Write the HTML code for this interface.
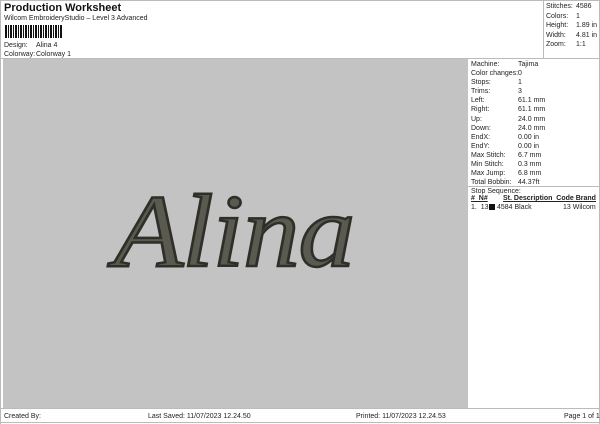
<!DOCTYPE html>
<html><head><meta charset="utf-8"><style>
*{margin:0;padding:0;box-sizing:border-box}
body{width:600px;height:424px;background:#fff;font-family:"Liberation Sans",sans-serif;font-size:7px;color:#222;position:relative;overflow:hidden}
.a{position:absolute;white-space:nowrap}
.ln{position:absolute;background:#bbb}
</style></head><body>
<div class="ln" style="left:0;top:0;width:600px;height:1px"></div>
<div class="ln" style="left:0;top:0;width:1px;height:424px"></div>
<div class="ln" style="left:599px;top:0;width:1px;height:424px"></div>
<div class="ln" style="left:543px;top:0;width:1px;height:58px"></div>
<div class="ln" style="left:0;top:58px;width:600px;height:1px"></div>
<div class="a" style="left:4px;top:2px;font-size:11px;font-weight:bold;color:#111">Production Worksheet</div>
<div class="a" style="left:4px;top:15px">Wilcom EmbroideryStudio – Level 3 Advanced</div>
<div class="a" style="left:5px;top:25px;width:57px;height:13px;background:repeating-linear-gradient(90deg,#111 0 2px,#fff 2px 3px,#111 3px 4px,#fff 4px 5px)"></div>
<div class="a" style="left:4px;top:42px">Design:</div><div class="a" style="left:36px;top:42px">Alina 4</div>
<div class="a" style="left:4px;top:51px">Colorway:</div><div class="a" style="left:36px;top:51px">Colorway 1</div>
<div class="a" style="left:546px;top:2px;line-height:9.5px">Stitches:<br>Colors:<br>Height:<br>Width:<br>Zoom:</div>
<div class="a" style="left:576px;top:2px;line-height:9.5px">4586<br>1<br>1.89 in<br>4.81 in<br>1:1</div>
<div class="a" style="left:3px;top:59px;width:465px;height:349px;background:#c3c3c3"></div>
<div class="a" style="left:114px;top:172px;font-family:'Liberation Serif',serif;font-style:italic;font-size:104px;color:#5a5a50;-webkit-text-stroke:2.5px #2f2f29;transform:scaleX(1.09);transform-origin:left top;letter-spacing:-1px">Alina</div>
<div class="a" style="left:471px;top:60px;line-height:9.1px">Machine:<br>Color changes:<br>Stops:<br>Trims:<br>Left:<br>Right:<br>Up:<br>Down:<br>EndX:<br>EndY:<br>Max Stitch:<br>Min Stitch:<br>Max Jump:<br>Total Bobbin:<br>Stop Sequence:</div>
<div class="a" style="left:518px;top:60px;line-height:9.1px">Tajima<br>0<br>1<br>3<br>61.1 mm<br>61.1 mm<br>24.0 mm<br>24.0 mm<br>0.00 in<br>0.00 in<br>6.7 mm<br>0.3 mm<br>6.8 mm<br>44.37ft</div>
<div class="ln" style="left:468px;top:186px;width:131px;height:1px"></div>
<div class="a" style="left:471px;top:195px;font-weight:bold;text-decoration:underline">#&nbsp;&nbsp;N#</div>
<div class="a" style="left:503px;top:195px;font-weight:bold;text-decoration:underline">St. Description&nbsp;&nbsp;Code Brand</div>
<div class="a" style="left:471px;top:204px">1.&nbsp;&nbsp;13</div>
<div class="a" style="left:489px;top:204px;width:6px;height:6px;background:#111"></div>
<div class="a" style="left:497px;top:204px">4584 Black</div>
<div class="a" style="left:563px;top:204px">13 Wilcom</div>
<div class="ln" style="left:0;top:408px;width:600px;height:1px"></div>
<div class="ln" style="left:0;top:422px;width:600px;height:1px"></div>
<div class="a" style="left:4px;top:413px">Created By:</div>
<div class="a" style="left:148px;top:413px">Last Saved: 11/07/2023 12.24.50</div>
<div class="a" style="left:356px;top:413px">Printed: 11/07/2023 12.24.53</div>
<div class="a" style="left:564px;top:413px">Page 1 of 1</div>
</body></html>
